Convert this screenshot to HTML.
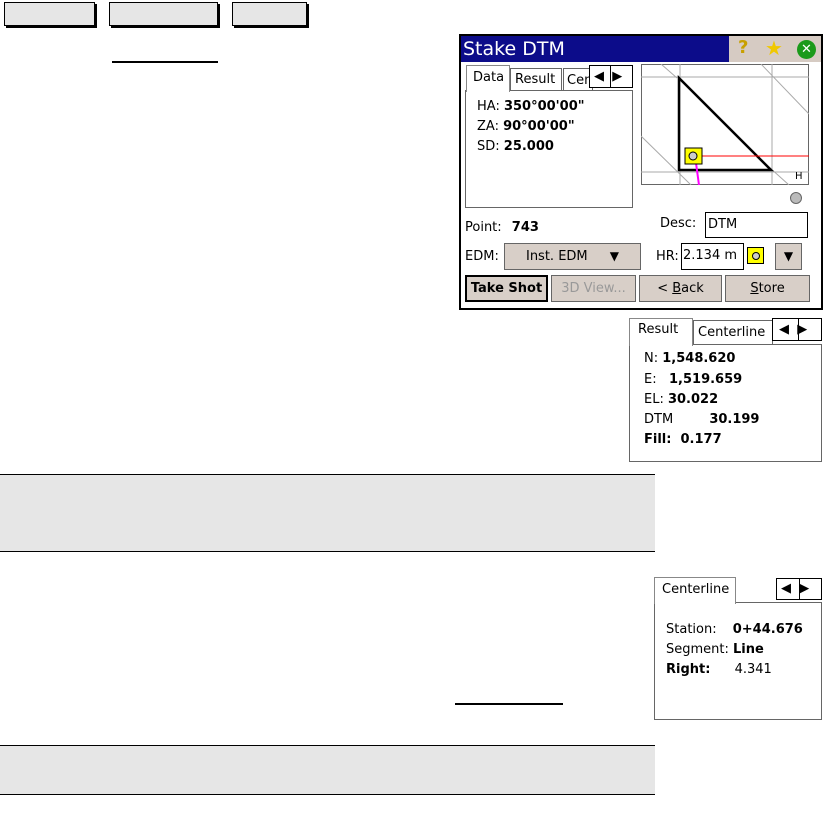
<!DOCTYPE html>
<html><head><style>
*{margin:0;padding:0;box-sizing:border-box}
body{width:823px;height:823px;position:relative;background:#fff;font-family:"DejaVu Sans","Liberation Sans",sans-serif;overflow:hidden}
.a{position:absolute}
.tb{background:#e6e6e6;border:1px solid #000;box-shadow:2px 2px 0 #000}
.g{background:#e6e6e6;border-top:1px solid #000;border-bottom:1px solid #000}
.t{font-size:13px;color:#000;white-space:nowrap}
.b{font-weight:bold}
.btn{background:#d8cfc8;border:1px solid #666;font-size:13px;text-align:center;line-height:25px}
.box{background:#fff;border:1px solid #666}
.arr{background:#fff;border:1px solid #000;font-size:11px;text-align:center}
</style></head><body>
<div class="a tb" style="left:4px;top:2px;width:91px;height:24px"></div>
<div class="a tb" style="left:109px;top:2px;width:109px;height:24px"></div>
<div class="a tb" style="left:232px;top:2px;width:75px;height:24px"></div>
<div class="a" style="left:112px;top:61px;width:106px;height:2px;background:#000"></div>

<div class="a g" style="left:0;top:474px;width:655px;height:78px"></div>
<div class="a g" style="left:0;top:745px;width:655px;height:50px"></div>
<div class="a" style="left:455px;top:703px;width:108px;height:2px;background:#000"></div>

<!-- main window -->
<div class="a" style="left:459px;top:34px;width:364px;height:276px;border:2px solid #000;background:#fff"></div>
<div class="a" style="left:461px;top:36px;width:268px;height:26px;background:#0c0c8a;color:#fff;font-size:19px;line-height:26px;padding-left:2px">Stake DTM</div>
<div class="a" style="left:729px;top:36px;width:92px;height:26px;background:#d6cbc3"></div>
<div class="a" style="left:738px;top:37px;font-size:18px;color:#c8a000;font-weight:bold">?</div>
<div class="a" style="left:765px;top:36px;font-size:20px;color:#f0c800">★</div>
<div class="a" style="left:797px;top:40px;width:19px;height:19px;border-radius:50%;background:#1a9a1a;color:#fff;font-size:13px;text-align:center;line-height:19px;font-weight:bold">✕</div>
<!-- tabs -->
<div class="a box" style="left:465px;top:90px;width:168px;height:118px"></div>
<div class="a" style="left:466px;top:65px;width:44px;height:27px;border:1px solid #888;border-bottom:none;background:#fff"></div>
<div class="a t" style="left:473px;top:70px">Data</div>
<div class="a box" style="left:510px;top:68px;width:52px;height:23px"></div>
<div class="a t" style="left:515px;top:72px">Result</div>
<div class="a box" style="left:563px;top:68px;width:30px;height:23px;overflow:hidden"><span class="t" style="padding-left:3px">Cen</span></div>
<div class="a arr" style="left:589px;top:65px;width:44px;height:23px"></div>
<div class="a" style="left:610px;top:65px;width:1px;height:23px;background:#000"></div>
<div class="a t" style="left:594px;top:69px">◀&nbsp;&nbsp;▶</div>
<div class="a t" style="left:477px;top:99px">HA: <b>350°00'00"</b></div>
<div class="a t" style="left:477px;top:119px">ZA: <b>90°00'00"</b></div>
<div class="a t" style="left:477px;top:139px">SD: <b>25.000</b></div>
<!-- map -->
<svg class="a" style="left:641px;top:64px" width="168" height="121" viewBox="0 0 168 121">
<rect x="0.5" y="0.5" width="167" height="120" fill="#fff" stroke="#666"/>
<g stroke="#aaa" stroke-width="1">
<line x1="0" y1="13" x2="168" y2="13"/><line x1="0" y1="108" x2="168" y2="108"/>
<line x1="39" y1="0" x2="39" y2="121"/><line x1="131" y1="0" x2="131" y2="121"/>
<line x1="20" y1="0" x2="36" y2="14"/><line x1="120" y1="0" x2="168" y2="50"/>
<line x1="0" y1="72" x2="50" y2="121"/><line x1="128" y1="103" x2="148" y2="121"/>
</g>
<polygon points="38,14 38,106 130,106" fill="none" stroke="#000" stroke-width="2.5"/>
<line x1="55" y1="92" x2="168" y2="92" stroke="#f00"/>
<line x1="55" y1="99" x2="58" y2="121" stroke="#f0f" stroke-width="2"/>
<rect x="44" y="84" width="17" height="16" fill="#ff0" stroke="#000"/>
<circle cx="52" cy="92" r="4" fill="#ccc" stroke="#000"/>
<text x="154" y="115" font-size="10" font-family="DejaVu Sans">H</text>
</svg>
<div class="a" style="left:790px;top:192px;width:12px;height:12px;border-radius:50%;background:#bbb;border:1px solid #666"></div>
<div class="a t" style="left:465px;top:220px">Point: <b style="margin-left:6px">743</b></div>
<div class="a t" style="left:660px;top:216px">Desc:</div>
<div class="a box" style="left:705px;top:212px;width:103px;height:26px;border-color:#000"></div>
<div class="a t" style="left:708px;top:217px">DTM</div>
<div class="a t" style="left:465px;top:249px">EDM:</div>
<div class="a btn" style="left:504px;top:243px;width:137px;height:27px">Inst. EDM <span style="margin-left:18px;font-size:12px">▼</span></div>
<div class="a t" style="left:656px;top:249px">HR:</div>
<div class="a box" style="left:681px;top:243px;width:63px;height:27px;border-color:#000"></div>
<div class="a t" style="left:683px;top:248px">2.134 m</div>
<div class="a" style="left:747px;top:247px;width:17px;height:17px;background:#ff0;border:1px solid #000"></div>
<div class="a" style="left:752px;top:252px;width:8px;height:8px;border-radius:50%;background:#ccc;border:1px solid #000"></div>
<div class="a btn" style="left:775px;top:243px;width:27px;height:27px;font-size:12px">▼</div>
<div class="a btn b" style="left:465px;top:275px;width:83px;height:27px;border:2px solid #000;line-height:23px">Take Shot</div>
<div class="a btn" style="left:551px;top:275px;width:85px;height:27px;color:#999">3D View...</div>
<div class="a btn" style="left:639px;top:275px;width:83px;height:27px">&lt; <u>B</u>ack</div>
<div class="a btn" style="left:725px;top:275px;width:85px;height:27px"><u>S</u>tore</div>

<!-- result panel -->
<div class="a box" style="left:629px;top:344px;width:193px;height:118px"></div>
<div class="a" style="left:629px;top:318px;width:64px;height:28px;border:1px solid #888;border-bottom:none;background:#fff"></div>
<div class="a t" style="left:638px;top:322px">Result</div>
<div class="a box" style="left:693px;top:320px;width:80px;height:25px;overflow:hidden"><span class="t" style="padding-left:4px;line-height:22px">Centerline</span></div>
<div class="a arr" style="left:772px;top:318px;width:50px;height:23px"></div>
<div class="a" style="left:798px;top:318px;width:1px;height:23px;background:#000"></div>
<div class="a t" style="left:779px;top:322px">◀&nbsp;&nbsp;▶</div>
<div class="a t" style="left:644px;top:351px">N: <b>1,548.620</b></div>
<div class="a t" style="left:644px;top:372px">E: &nbsp;&nbsp;<b>1,519.659</b></div>
<div class="a t" style="left:644px;top:392px">EL: <b>30.022</b></div>
<div class="a t" style="left:644px;top:412px">DTM <b style="margin-left:32px">30.199</b></div>
<div class="a t b" style="left:644px;top:432px">Fill: &nbsp;0.177</div>

<!-- centerline panel -->
<div class="a box" style="left:654px;top:602px;width:168px;height:118px"></div>
<div class="a" style="left:654px;top:577px;width:82px;height:27px;border:1px solid #888;border-bottom:none;background:#fff"></div>
<div class="a t" style="left:662px;top:582px">Centerline</div>
<div class="a arr" style="left:776px;top:578px;width:46px;height:22px"></div>
<div class="a" style="left:799px;top:578px;width:1px;height:22px;background:#000"></div>
<div class="a t" style="left:781px;top:581px">◀&nbsp;&nbsp;▶</div>
<div class="a t" style="left:666px;top:622px">Station: <b style="margin-left:12px">0+44.676</b></div>
<div class="a t" style="left:666px;top:642px">Segment: <b>Line</b></div>
<div class="a t" style="left:666px;top:662px"><b>Right:</b> <span style="margin-left:20px">4.341</span></div>
</body></html>
